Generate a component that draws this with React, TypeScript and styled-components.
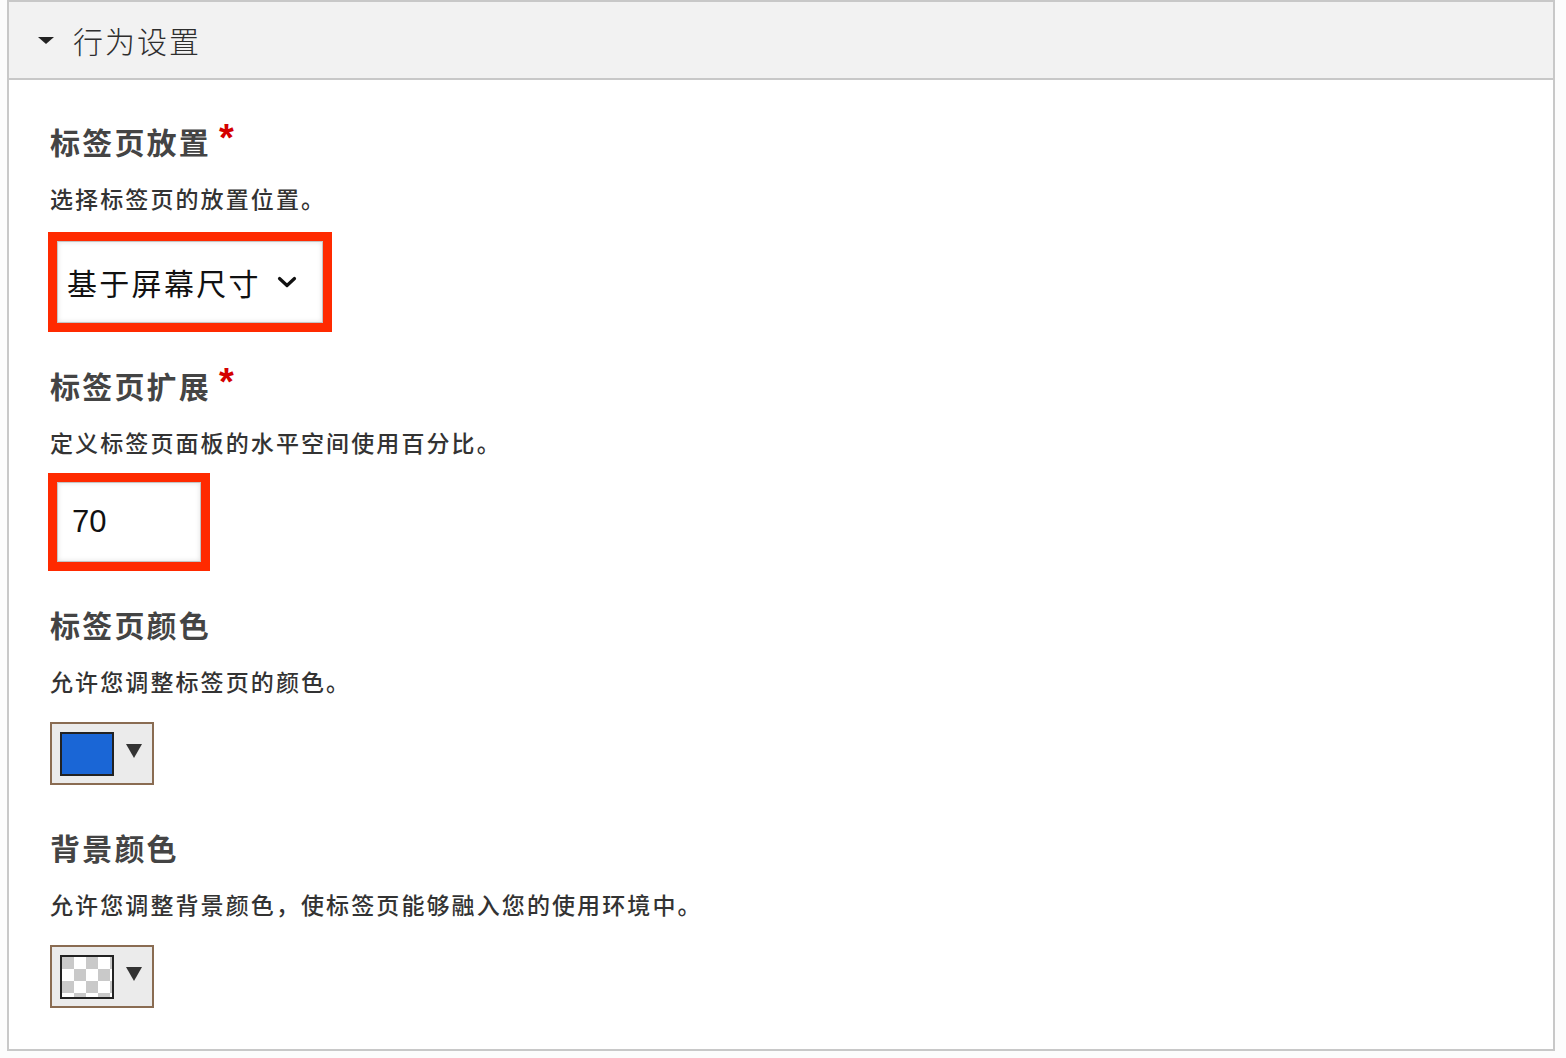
import styled, { createGlobalStyle } from "styled-components";
import { FC } from "react";

const CJK = `"Noto Sans CJK SC", "Noto Sans", sans-serif`;

const GlobalStyle = createGlobalStyle`
  body {
    margin: 0;
    background: #fcfcfc;
    font-family: ${CJK};
  }
`;

const Panel = styled.section`
  margin-left: 7px;
  width: 1548px;
  box-sizing: border-box;
  border: 2px solid #c8c8c8;
  background: #fff;
`;

const Header = styled.div`
  height: 76px;
  display: flex;
  align-items: center;
  background: #f2f2f2;
  border-bottom: 2px solid #c8c8c8;
  padding-left: 29px;
`;

const Caret = styled.span`
  width: 0;
  height: 0;
  border-left: 8px solid transparent;
  border-right: 8px solid transparent;
  border-top: 7px solid #222;
  margin-right: 19px;
`;

const HeaderTitle = styled.h2`
  margin: 0;
  font-size: 30px;
  font-weight: 300;
  letter-spacing: 2px;
  color: #2e2e2e;
`;

const Body = styled.div`
  padding: 41px 0 41px 41px;
  display: flex;
  flex-direction: column;
  gap: 42px;
`;

const Field = styled.div`
  display: flex;
  flex-direction: column;
  align-items: flex-start;
`;

const Label = styled.div`
  display: flex;
  align-items: flex-start;
  font-size: 30px;
  line-height: 40px;
  height: 40px;
  font-weight: 700;
  letter-spacing: 2.2px;
  color: #444;
`;

const Required = styled.span`
  color: #d40000;
  font-family: "Liberation Sans", sans-serif;
  font-weight: 700;
  font-size: 38px;
  line-height: 38px;
  margin-left: 8px;
  margin-top: -2px;
`;

const Desc = styled.div`
  margin-top: 22px;
  font-size: 23px;
  line-height: 30px;
  font-weight: 500;
  letter-spacing: 2.1px;
  color: #333;
`;

const Highlight = styled.div<{ $gap: number }>`
  margin-top: ${(p) => p.$gap}px;
  margin-left: 7px;
  outline: 9px solid #ff2a00;
`;

const SelectBox = styled.div`
  width: 266px;
  height: 82px;
  box-sizing: border-box;
  border: 1px solid #c4c4c4;
  box-shadow: inset 0 0 5px rgba(0, 0, 0, 0.12);
  background: #fff;
  display: flex;
  align-items: center;
  padding-left: 9px;
  font-size: 30px;
  letter-spacing: 2.3px;
  color: #111;
`;

const Chevron = styled.svg`
  margin-left: 16px;
`;

const NumberBox = styled.div`
  width: 144px;
  height: 80px;
  box-sizing: border-box;
  border: 1px solid #c4c4c4;
  box-shadow: inset 0 0 5px rgba(0, 0, 0, 0.12);
  background: #fff;
  display: flex;
  align-items: center;
  padding-left: 14px;
  font-family: "Liberation Sans", Arial, sans-serif;
  font-size: 31px;
  color: #111;
`;

const Picker = styled.div`
  margin-top: 26px;
  width: 104px;
  height: 63px;
  box-sizing: border-box;
  border: 2px solid #8a6c52;
  background: #ebebeb;
  display: flex;
  align-items: center;
  padding-left: 8px;
`;

// no colour = transparent, shown as a checkerboard
const Swatch = styled.div<{ $color?: string }>`
  width: 54px;
  height: 44px;
  box-sizing: border-box;
  border: 2px solid #222;
  background: ${(p) =>
    p.$color ??
    `repeating-conic-gradient(#fff 0% 25%, #c9c9c9 0% 50%) 0 0 / 24px 24px`};
`;

const PickerArrow = styled.span`
  width: 0;
  height: 0;
  margin-left: 12px;
  margin-top: -6px;
  border-left: 8px solid transparent;
  border-right: 8px solid transparent;
  border-top: 14px solid #333;
`;

const ColorPicker: FC<{ color?: string }> = ({ color }) => (
  <Picker>
    <Swatch $color={color} />
    <PickerArrow />
  </Picker>
);

function App() {
  return (
    <>
      <GlobalStyle />
      <Panel>
        <Header>
          <Caret />
          <HeaderTitle>行为设置</HeaderTitle>
        </Header>
        <Body>
          <Field>
            <Label>
              标签页放置<Required>*</Required>
            </Label>
            <Desc>选择标签页的放置位置。</Desc>
            <Highlight $gap={28}>
              <SelectBox>
                基于屏幕尺寸
                <Chevron width="20" height="12" viewBox="0 0 20 12">
                  <path
                    d="M2.5 2.5 L10 9.5 L17.5 2.5"
                    fill="none"
                    stroke="#111"
                    strokeWidth="3.2"
                    strokeLinecap="round"
                    strokeLinejoin="round"
                  />
                </Chevron>
              </SelectBox>
            </Highlight>
          </Field>

          <Field>
            <Label>
              标签页扩展<Required>*</Required>
            </Label>
            <Desc>定义标签页面板的水平空间使用百分比。</Desc>
            <Highlight $gap={25}>
              <NumberBox>70</NumberBox>
            </Highlight>
          </Field>

          <Field>
            <Label>标签页颜色</Label>
            <Desc>允许您调整标签页的颜色。</Desc>
            <ColorPicker color="#1a66d6" />
          </Field>

          <Field>
            <Label>背景颜色</Label>
            <Desc>允许您调整背景颜色，使标签页能够融入您的使用环境中。</Desc>
            <ColorPicker />
          </Field>
        </Body>
      </Panel>
    </>
  );
}

export default App;
